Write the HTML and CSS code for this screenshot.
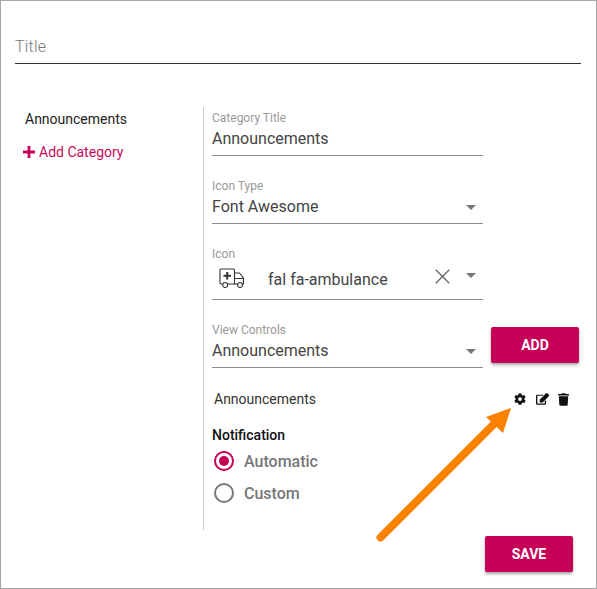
FILE: index.html
```html
<!DOCTYPE html>
<html lang="en">
<head>
<meta charset="utf-8">
<title>Announcements</title>
<link rel="stylesheet" href="styles.css">
</head>
<body>
<div class="frame">
  <div class="title-field">Title</div>
  <div class="columns">
    <aside class="side">
      <div class="side-item">Announcements</div>
      <a class="add-cat"><svg class="plus" viewBox="0 0 12 12"><path d="M4.6 0h2.8v4.6H12v2.8H7.4V12H4.6V7.4H0V4.6h4.6z"/></svg>Add Category</a>
    </aside>
    <main class="panel">
      <div class="field f1">
        <div class="label">Category Title</div>
        <div class="value">Announcements</div>
      </div>
      <div class="field f2">
        <div class="label">Icon Type</div>
        <div class="value">Font Awesome<span class="caret"></span></div>
      </div>
      <div class="field f3">
        <div class="label">Icon</div>
        <div class="value icon-value">
          <svg class="amb" viewBox="0 0 26 20" fill="none" stroke="#333" stroke-width="1.1">
            <path d="M3.500 16H2.200Q1 16 1 14.800V2.200Q1 1 2.200 1H14.500Q15.500 1 15.500 2V16H9"/>
            <path d="M15.500 5H20.500L24.500 10V16H23.500M18.500 16H15.500M15.800 10.500H24.300"/>
            <circle cx="6.200" cy="17" r="2.500"/><circle cx="21" cy="17" r="2.500"/>
            <path d="M8.200 4v7.500M4.500 7.700h7.500" stroke-width="2"/>
          </svg>
          <span class="icon-name">fal fa-ambulance</span>
          <svg class="clear" viewBox="0 0 14 14" fill="none" stroke="#666" stroke-width="1.300"><path d="M.7.7l12.600 12.600M13.300.7L.7 13.300"/></svg>
          <span class="caret"></span>
        </div>
      </div>
      <div class="view-row">
        <div class="field f4">
          <div class="label">View Controls</div>
          <div class="value">Announcements<span class="caret"></span></div>
        </div>
        <button class="btn add">ADD</button>
      </div>
      <div class="control-row">
        <span>Announcements</span>
        <div class="actions">
          <svg class="gear" viewBox="0 0 512 512"><path d="M487 316l-42-25a190 190 0 0 0 0-70l42-25c5-3 7-9 5-14-11-35-30-67-54-93-4-4-10-5-15-2l-42 25a187 187 0 0 0-61-35V28c0-6-4-11-9-12a220 220 0 0 0-110 0c-5 1-9 6-9 12v49a187 187 0 0 0-61 35L89 87c-5-3-11-2-15 2-24 26-43 58-54 93-2 5 0 11 5 14l42 25a190 190 0 0 0 0 70l-42 25c-5 3-7 9-5 14 11 35 30 67 54 93 4 4 10 5 15 2l42-25a187 187 0 0 0 61 35v49c0 6 4 11 9 12 37 8 74 8 110 0 5-1 9-6 9-12v-49a187 187 0 0 0 61-35l42 25c5 3 11 2 15-2 24-26 43-58 54-93 2-5 0-11-5-14zM256 336a80 80 0 1 1 0-160 80 80 0 0 1 0 160z"/></svg>
          <svg class="edit" viewBox="0 0 576 512"><path d="M403 344l32-32c5-5 13-1 13 6v146a48 48 0 0 1-48 48H48a48 48 0 0 1-48-48V112a48 48 0 0 1 48-48h274c7 0 11 9 6 14l-32 32c-2 2-4 2-6 2H60v340h328V350c0-2 1-4 3-6zM560 143L297 406l-91 10a41 41 0 0 1-46-46l10-91L433 16a59 59 0 0 1 83 0l44 44a59 59 0 0 1 0 83z"/></svg>
          <svg class="trash" viewBox="0 0 448 512"><path d="M432 32H312l-9-19a24 24 0 0 0-22-13H167a24 24 0 0 0-22 13l-9 19H16A16 16 0 0 0 0 48v32a16 16 0 0 0 16 16h416a16 16 0 0 0 16-16V48a16 16 0 0 0-16-16zM53 467a48 48 0 0 0 48 45h246a48 48 0 0 0 48-45l21-339H32z"/></svg>
        </div>
      </div>
      <div class="notif-head">Notification</div>
      <div class="radio-row"><span class="radio on"></span>Automatic</div>
      <div class="radio-row"><span class="radio"></span>Custom</div>
    </main>
  </div>
  <div class="footer"><button class="btn save">SAVE</button></div>
  <svg class="arrow" viewBox="0 0 597 589" fill="none">
    <path d="M380.500 537.500L495 423" stroke="#fb8200" stroke-width="8" stroke-linecap="round"/>
    <path d="M511 408L503 433L486 417Z" fill="#fb8200"/>
  </svg>
</div>
</body>
</html>
```
FILE: styles.css
```css
* { box-sizing: border-box; }
html, body { margin: 0; padding: 0; background: #fff; }
body { font-family: Roboto, "Liberation Sans", sans-serif; color: #333; }
.frame {
  position: relative;
  width: 597px;
  height: 589px;
  border: 1px solid #a6a6a6;
  padding: 0 15px 0 14px;
}
.title-field {
  height: 63px;
  padding-top: 36px;
  border-bottom: 1px solid #333;
  font-size: 16px;
  line-height: 19px;
  font-weight: 300;
  letter-spacing: 0.2px;
  color: #777;
}
.columns { display: flex; margin-top: 43px; height: 423px; }
.side { width: 188px; padding-left: 10px; }
.side-item { font-size: 14px; line-height: 16px; margin-top: 4px; color: #222; }
.add-cat {
  display: flex;
  align-items: center;
  margin: 17px 0 0 -2px;
  font-size: 14px;
  line-height: 16px;
  color: #c90a5c;
}
.plus { width: 12px; height: 12px; fill: #c7005a; margin-right: 4px; }
.panel { flex: 1; border-left: 1px solid #c8c8c8; padding-left: 8px; }
.field { width: 271px; border-bottom: 1px solid #8c8c8c; }
.label { font-size: 12px; line-height: 14px; color: #999; }
.value { position: relative; font-size: 16px; line-height: 19px; color: #444; }
.f1 { margin-top: 4px; height: 45px; }
.f1 .value, .f2 .value, .f4 .value { margin-top: 4px; }
.f2 { margin-top: 23px; height: 45px; }
.f3 { margin-top: 23px; height: 53px; }
.f4 { height: 45px; }
.caret {
  position: absolute;
  right: 7px;
  top: 8px;
  border-left: 5px solid transparent;
  border-right: 5px solid transparent;
  border-top: 5px solid #777;
}
.icon-value { display: flex; align-items: center; height: 30px; margin-top: 2px; }
.amb { width: 26px; height: 20px; margin-left: 7px; }
.icon-name { margin-left: 23px; position: relative; top: 1px; }
.clear { position: absolute; left: 223px; top: 6px; width: 15px; height: 15px; }
.icon-value .caret { top: 10px; }
.view-row { display: flex; align-items: flex-start; margin-top: 23px; }
.btn {
  border: 0;
  border-radius: 2px;
  background: #c50056;
  color: #fff;
  font: 700 14px/16px Roboto, "Liberation Sans", sans-serif;
  box-shadow: 0 2px 3px rgba(0,0,0,.35);
  padding: 0;
}
.add { width: 88px; height: 36px; margin: 4px 0 0 8px; }
.control-row {
  display: flex;
  align-items: center;
  justify-content: space-between;
  width: 360px;
  height: 20px;
  margin-top: 21px;
  padding-left: 2px;
  font-size: 14px;
  color: #333;
}
.actions { display: flex; align-items: center; width: 58px; }
.actions svg { height: 12px; fill: #111; flex: none; }
.gear { width: 12px; margin-right: 10px; }
.edit { width: 13px; margin-right: 9px; }
.trash { width: 11px; }
.actions .trash { height: 13px; }
.notif-head { margin-top: 18px; font-size: 14px; line-height: 16px; font-weight: 500; color: #111; }
.radio-row {
  display: flex;
  align-items: center;
  height: 32px;
  font-size: 16px;
  font-weight: 500;
  color: #777;
}
.notif-head + .radio-row { margin-top: 2px; }
.radio {
  position: relative;
  width: 20px;
  height: 20px;
  margin: 0 10px 0 2px;
  border: 2px solid #777;
  border-radius: 50%;
}
.radio.on { border-color: #c50056; }
.radio.on::after {
  content: "";
  position: absolute;
  left: 3px;
  top: 3px;
  width: 10px;
  height: 10px;
  border-radius: 50%;
  background: #c50056;
}
.footer { display: flex; justify-content: flex-end; padding-right: 8px; margin-top: 6px; }
.save { width: 88px; height: 36px; }
.arrow { position: absolute; left: -1px; top: -1px; width: 597px; height: 589px; pointer-events: none; }
```
